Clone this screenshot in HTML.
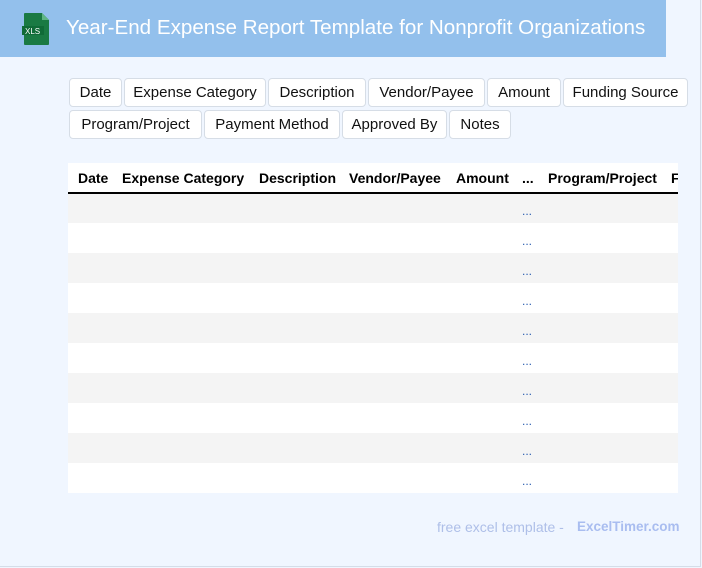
<!DOCTYPE html>
<html><head><style>
*{margin:0;padding:0;box-sizing:border-box}
body{width:702px;height:568px;background:#f0f6ff;font-family:"Liberation Sans",sans-serif;position:relative;overflow:hidden}
.frame{position:absolute;left:0;top:0;width:701px;height:567px;border-right:1px solid #d5dde8;border-bottom:1px solid #d5dde8}
.hdr{position:absolute;left:0;top:0;width:666px;height:57px;background:#93c0ec}
.hdr h1{position:absolute;left:66px;top:16px;font-size:20.6px;font-weight:normal;color:#fff;white-space:nowrap}
.chip{position:absolute;height:29px;background:#fff;border:1px solid #d6dde6;border-radius:4px;font-size:15px;line-height:27px;text-align:center;color:#111}
.th{position:absolute;top:170px;font-size:14px;font-weight:bold;color:#000;white-space:nowrap}
.tbl{position:absolute;left:68px;top:163px;width:610px;height:330px;background:#fff;overflow:hidden}
.line{position:absolute;left:68px;top:192px;width:610px;height:2px;background:#000}
.row{position:absolute;left:68px;width:610px;height:30px}
.dots{position:absolute;left:522px;font-size:12px;color:#2a5db0}
.foot{position:absolute;top:519px;font-size:14px;color:#aebfe8}
</style></head><body>
<div class="frame"></div>
<div class="hdr">
<svg style="position:absolute;left:22px;top:13px" width="28" height="32" viewBox="0 0 28 32"><path d="M3 0h17l7 7v24a1 1 0 0 1-1 1H3a1 1 0 0 1-1-1V1a1 1 0 0 1 1-1z" fill="#1a7a43"/><path d="M20 0v7h7z" fill="#5fb585"/><rect x="0" y="13" width="22" height="9" fill="#106b37"/><text x="3" y="21" font-size="8" fill="#fff" font-family="Liberation Sans">XLS</text></svg>
<h1>Year-End Expense Report Template for Nonprofit Organizations</h1>
</div>
<div class="chip" style="left:69px;top:78px;width:53px">Date</div>
<div class="chip" style="left:124px;top:78px;width:142px">Expense Category</div>
<div class="chip" style="left:268px;top:78px;width:98px">Description</div>
<div class="chip" style="left:368px;top:78px;width:117px">Vendor/Payee</div>
<div class="chip" style="left:487px;top:78px;width:74px">Amount</div>
<div class="chip" style="left:563px;top:78px;width:125px">Funding Source</div>
<div class="chip" style="left:69px;top:110px;width:133px">Program/Project</div>
<div class="chip" style="left:204px;top:110px;width:136px">Payment Method</div>
<div class="chip" style="left:342px;top:110px;width:105px">Approved By</div>
<div class="chip" style="left:449px;top:110px;width:62px">Notes</div>
<div class="tbl"></div>
<div class="th" style="left:78px">Date</div>
<div class="th" style="left:122px">Expense Category</div>
<div class="th" style="left:259px">Description</div>
<div class="th" style="left:349px">Vendor/Payee</div>
<div class="th" style="left:456px">Amount</div>
<div class="th" style="left:522px">...</div>
<div class="th" style="left:548px">Program/Project</div>
<div class="th" style="left:671px;width:7px;overflow:hidden">F</div>
<div class="line"></div>
<div class="row" style="top:194px;height:29px;background:#f4f4f4"></div>
<div class="row" style="top:253px;background:#f4f4f4"></div>
<div class="row" style="top:313px;background:#f4f4f4"></div>
<div class="row" style="top:373px;background:#f4f4f4"></div>
<div class="row" style="top:433px;background:#f4f4f4"></div>
<div class="dots" style="top:204px">...</div>
<div class="dots" style="top:234px">...</div>
<div class="dots" style="top:264px">...</div>
<div class="dots" style="top:294px">...</div>
<div class="dots" style="top:324px">...</div>
<div class="dots" style="top:354px">...</div>
<div class="dots" style="top:384px">...</div>
<div class="dots" style="top:414px">...</div>
<div class="dots" style="top:444px">...</div>
<div class="dots" style="top:474px">...</div>
<div class="foot" style="left:437px">free excel template -</div>
<div class="foot" style="left:577px;font-weight:bold;color:#a9bdf0;font-size:13.5px">ExcelTimer.com</div>
</body></html>
